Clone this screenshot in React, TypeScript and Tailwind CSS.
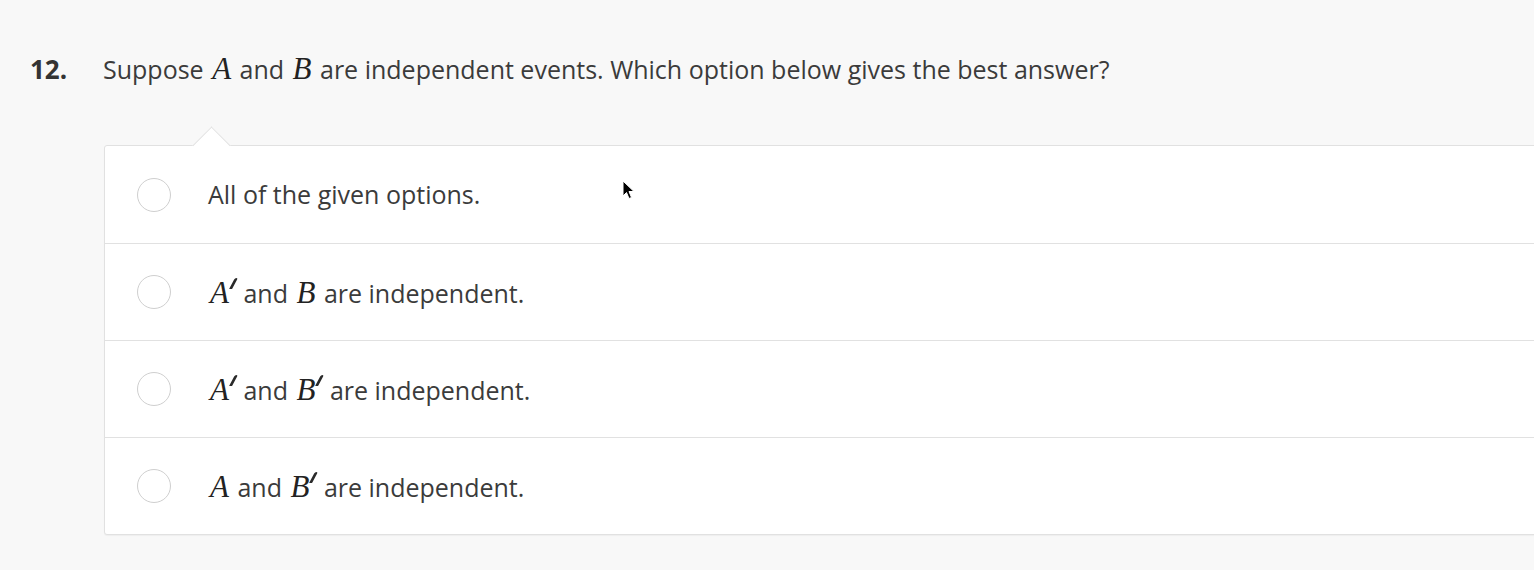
import React from "react";

const M = ({ children }: { children: React.ReactNode }) => (
  <span className="italic text-[#222] text-[1.24em] leading-none px-[2px]" style={{ fontFamily: '"Liberation Serif", "DejaVu Serif", serif' }}>
    {children}
  </span>
);

const P = () => (
  <span className="inline-block w-[3px] h-[11px] bg-[#2a2a2a] skew-x-[-28deg] rounded-t-[1.5px] rounded-b-[0.5px] align-[0.55em] ml-[1px] mr-[2px]" />
);

const Radio = () => (
  <div className="w-[34px] h-[34px] rounded-full border border-[#cfcfcf] bg-white shrink-0" />
);

const options: React.ReactNode[] = [
  <>All of the given options.</>,
  <>
    <M>A</M>
    <P /> and <M>B</M> are independent.
  </>,
  <>
    <M>A</M>
    <P /> and <M>B</M>
    <P /> are independent.
  </>,
  <>
    <M>A</M> and <M>B</M>
    <P /> are independent.
  </>,
];

export default function App() {
  return (
    <div
      className="w-[1534px] h-[570px] bg-[#f8f8f8] overflow-hidden text-[#3b3b3b]"
      style={{ fontFamily: '"Open Sans", "Noto Sans", sans-serif' }}
    >
      <div className="flex items-baseline pt-[50px] h-[145px]">
        <div className="w-[103px] pl-[30px] text-[26px] font-bold text-[#333] shrink-0">12.</div>
        <div className="text-[25px] text-[#3b3b3b]">
          Suppose <M>A</M> and <M>B</M> are independent events. Which option below gives the best answer?
        </div>
      </div>
      <div className="relative ml-[104px] w-[1460px] bg-white border border-[#e1e1e1] rounded-[3px] shadow-[0_1px_1px_rgba(0,0,0,0.04)]">
        <div className="absolute left-[93px] top-[-14px] w-[27px] h-[27px] bg-white border-t border-l border-[#e1e1e1] rotate-45" />
        <div className="relative">
          {options.map((o, i) => (
            <div
              key={i}
              className={`flex items-center h-[97px] pl-[32px] ${i > 0 ? "border-t border-[#e1e1e1]" : ""}`}
            >
              <Radio />
              <div className="ml-[37px] text-[25px] text-[#3b3b3b] leading-none">{o}</div>
            </div>
          ))}
        </div>
        <svg className="absolute left-[517px] top-[34px]" width="14" height="22" viewBox="0 0 14 22">
          <path d="M1 1 L1 16 L4.5 12.5 L7 18.5 L9.5 17.5 L7 11.5 L12 11.5 Z" fill="#000" stroke="#fff" strokeWidth="1" />
        </svg>
      </div>
    </div>
  );
}
